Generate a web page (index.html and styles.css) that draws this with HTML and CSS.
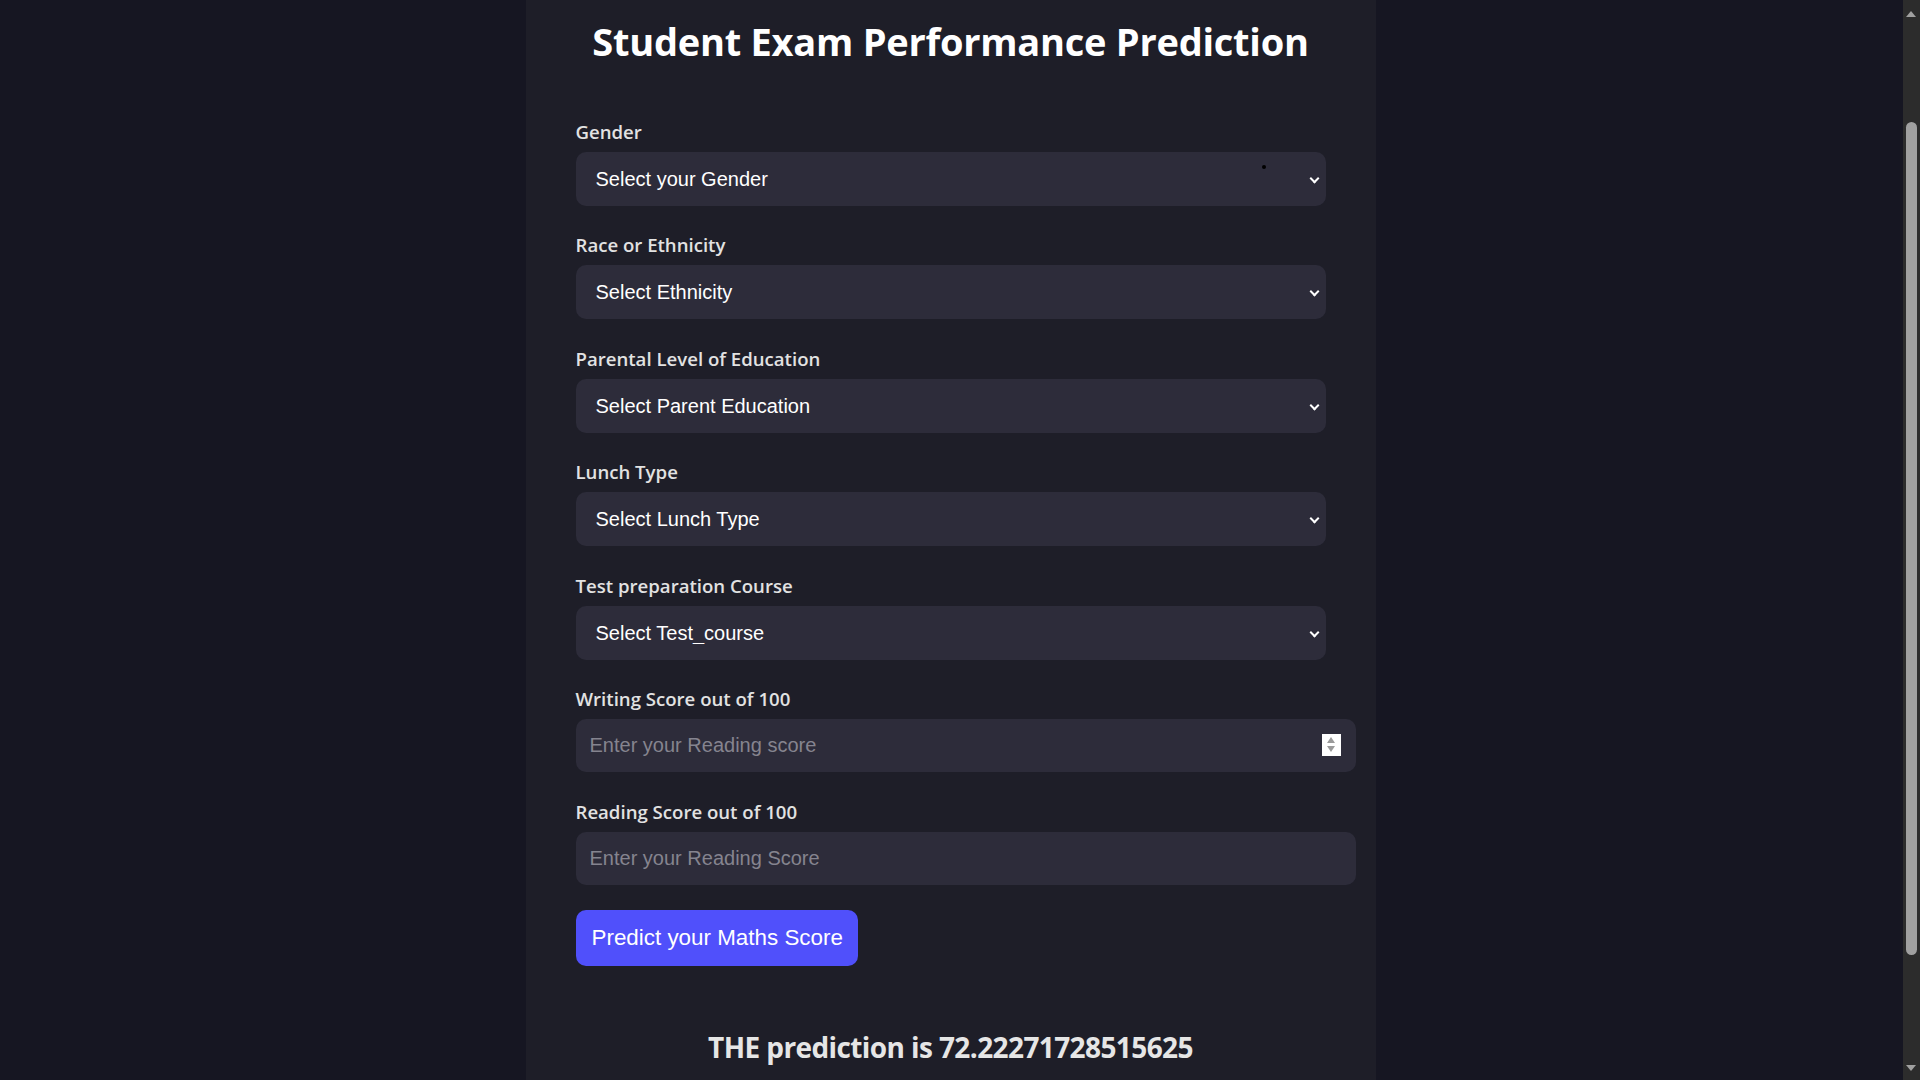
FILE: index.html
```html
<!DOCTYPE html>
<html lang="en">
<head>
<meta charset="utf-8">
<title>Student Exam Performance Prediction</title>
<link rel="stylesheet" href="styles.css">
</head>
<body>
<main class="page">
  <div class="card">
    <h1 class="title">Student Exam Performance Prediction</h1>
    <form class="form">
      <div class="field">
        <label class="label">Gender</label>
        <div class="select-wrap">
          <select class="select"><option>Select your Gender</option><option>Male</option><option>Female</option></select>
          <span class="cursor-dot"></span>
        </div>
      </div>
      <div class="field">
        <label class="label">Race or Ethnicity</label>
        <div class="select-wrap">
          <select class="select"><option>Select Ethnicity</option></select>
        </div>
      </div>
      <div class="field">
        <label class="label">Parental Level of Education</label>
        <div class="select-wrap">
          <select class="select"><option>Select Parent Education</option></select>
        </div>
      </div>
      <div class="field">
        <label class="label">Lunch Type</label>
        <div class="select-wrap">
          <select class="select"><option>Select Lunch Type</option></select>
        </div>
      </div>
      <div class="field">
        <label class="label">Test preparation Course</label>
        <div class="select-wrap">
          <select class="select"><option>Select Test_course</option></select>
        </div>
      </div>
      <div class="field field-input">
        <label class="label">Writing Score out of 100</label>
        <div class="input-wrap">
          <input class="input" type="text" placeholder="Enter your Reading score">
          <span class="spinner"><span class="spin-up"></span><span class="spin-down"></span></span>
        </div>
      </div>
      <div class="field field-input">
        <label class="label">Reading Score out of 100</label>
        <div class="input-wrap">
          <input class="input" type="text" placeholder="Enter your Reading Score">
        </div>
      </div>
      <button class="btn" type="button">Predict your Maths Score</button>
    </form>
    <h2 class="result">THE prediction is 72.22271728515625</h2>
  </div>
</main>
<div class="scrollbar" aria-hidden="true">
  <span class="sb-up"></span>
  <span class="sb-thumb"></span>
  <span class="sb-down"></span>
</div>
</body>
</html>
```

FILE: styles.css
```css
html {
  background: #161622;
}
body {
  margin: 0;
  background: #161622;
  font-family: "Open Sans", "Noto Sans", sans-serif;
  color: #e4e4e4;
}
.page {
  width: calc(100% - 19px);
  display: flex;
  justify-content: center;
}
.card {
  width: 850px;
  box-sizing: border-box;
  background: #1e1e28;
  padding: 14px 50px 152px;
}
.title {
  margin: 0 0 52px;
  font-size: 38px;
  line-height: 54px;
  font-weight: 700;
  letter-spacing: -0.25px;
  white-space: nowrap;
  color: #ffffff;
  text-align: center;
}
.form {
  display: flex;
  flex-direction: column;
}
.field {
  display: flex;
  flex-direction: column;
  margin-bottom: 27.4px;
}
.field-input {
  margin-bottom: 28px;
}
.label {
  font-size: 18.6px;
  line-height: 24px;
  font-weight: 600;
  color: #e2e2e2;
  margin-bottom: 8px;
}
.select-wrap,
.input-wrap {
  position: relative;
}
.select {
  appearance: none;
  -webkit-appearance: none;
  display: block;
  width: 100%;
  height: 54px;
  box-sizing: border-box;
  border: 0;
  border-radius: 10px;
  background: #2d2c3a;
  color: #ffffff;
  font-family: "Liberation Sans", Arial, sans-serif;
  font-size: 20px;
  padding: 0 20px;
  outline: none;
}
.select-wrap::after {
  content: "";
  position: absolute;
  right: 8px;
  top: 23px;
  width: 5px;
  height: 5px;
  border-right: 2px solid #ffffff;
  border-bottom: 2px solid #ffffff;
  transform: rotate(45deg);
  pointer-events: none;
}
.cursor-dot {
  position: absolute;
  left: 686px;
  top: 13px;
  width: 4px;
  height: 4px;
  border-radius: 50%;
  background: #000000;
}
.input {
  display: block;
  width: 780px;
  height: 53px;
  box-sizing: border-box;
  border: 0;
  border-radius: 10px;
  background: #2d2c3a;
  color: #ffffff;
  font-family: "Liberation Sans", Arial, sans-serif;
  font-size: 20px;
  padding: 0 14px;
  outline: none;
}
.input::placeholder {
  color: #85848f;
}
.spinner {
  position: absolute;
  left: 746px;
  top: 15px;
  width: 19px;
  height: 22px;
  background: #ffffff;
  display: flex;
  flex-direction: column;
  align-items: center;
  justify-content: center;
  gap: 3px;
}
.spin-up {
  width: 0;
  height: 0;
  border-left: 4px solid transparent;
  border-right: 4px solid transparent;
  border-bottom: 6px solid #9a9a9a;
}
.spin-down {
  width: 0;
  height: 0;
  border-left: 4px solid transparent;
  border-right: 4px solid transparent;
  border-top: 6px solid #9a9a9a;
}
.btn {
  align-self: flex-start;
  margin-top: -3px;
  height: 56px;
  padding: 0 15px 0 16px;
  border: 0;
  border-radius: 10px;
  background: #5050fb;
  color: #ffffff;
  font-family: "Liberation Sans", Arial, sans-serif;
  font-size: 22.4px;
}
.result {
  margin: 61px 0 0;
  font-size: 28px;
  line-height: 40px;
  font-weight: 700;
  letter-spacing: -0.6px;
  white-space: nowrap;
  color: #e6e6e6;
  text-align: center;
}
.scrollbar {
  position: fixed;
  top: 0;
  right: 0;
  width: 17px;
  height: 100vh;
  background: #2c2c2c;
}
.sb-up,
.sb-down {
  position: absolute;
  left: 3px;
  width: 0;
  height: 0;
  border-left: 5px solid transparent;
  border-right: 5px solid transparent;
}
.sb-up {
  top: 11px;
  border-bottom: 6px solid #a0a0a0;
}
.sb-down {
  bottom: 9px;
  border-top: 6px solid #a0a0a0;
}
.sb-thumb {
  position: absolute;
  left: 3px;
  top: 122px;
  width: 11px;
  height: 833px;
  border-radius: 6px;
  background: #a0a0a0;
}
```
